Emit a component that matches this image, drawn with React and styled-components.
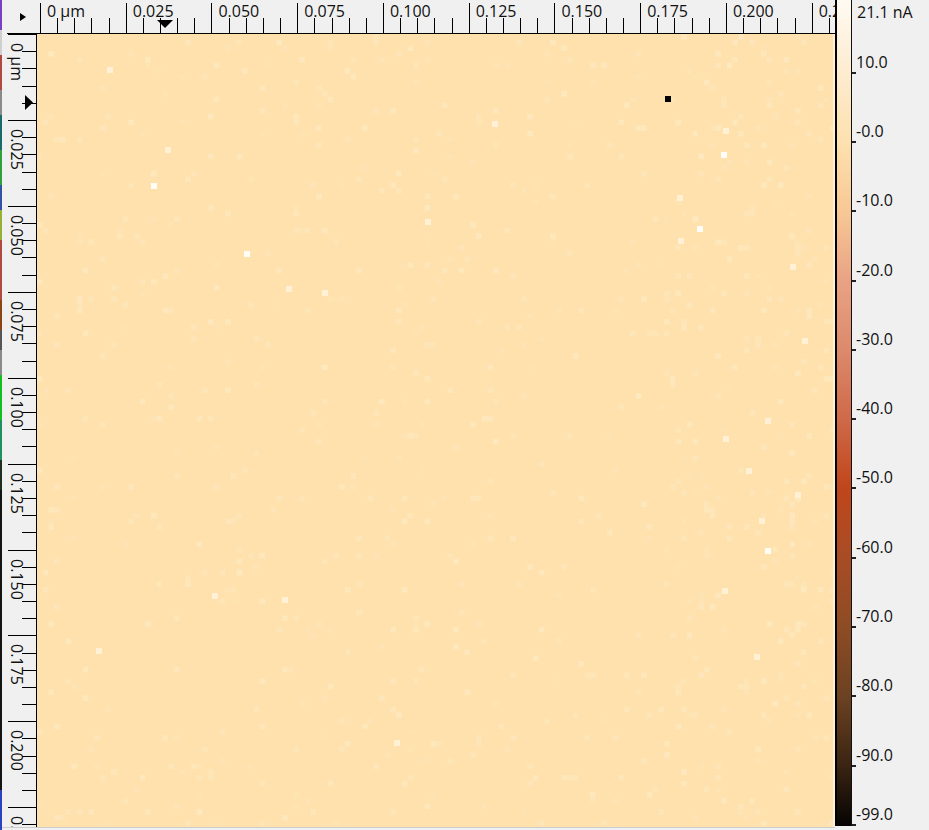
import React from 'react'
import styled, { createGlobalStyle } from 'styled-components'

const GlobalStyle = createGlobalStyle`
  html, body { margin: 0; padding: 0; background: #f0f0f0; }
  body {
    font-family: "Open Sans", "Noto Sans", sans-serif;
    color: #111;
    overflow: hidden;
  }
`

// scan geometry (px)
const IMG_W = 798
const IMG_H = 793
const X_STEP = 85.74   // 0.025 µm along x
const Y_STEP = 85.9    // 0.025 µm along y
const X0 = 3
const Y0 = 0.1

// colour scale: value -> page y
const scaleY = v => 72.7 + (10 - v) * 6.93

const Window = styled.div`
  width: 929px;
  height: 830px;
  display: flex;
  align-items: flex-start;
  background: #f0f0f0;
`

const EdgeStrip = styled.div`
  width: 2px;
  height: 830px;
  flex: none;
  background: linear-gradient(
    #7b3fc4 0 30px, #cfcfcf 30px 55px, #b04a40 55px 90px, #8a8a8a 90px 115px,
    #1c6b6b 115px 150px, #2fa03a 150px 185px, #3452a4 185px 210px, #96b035 210px 240px,
    #b04a40 240px 300px, #8b4513 300px 330px, #555 330px 350px, #8a8a8a 350px 375px,
    #12c020 375px 420px, #209060 420px 460px, #203020 460px 490px, #141414 490px 790px,
    #2a44c0 790px 830px
  );
`

const Viewer = styled.div`
  display: grid;
  grid-template-columns: 35px ${IMG_W}px;
  grid-template-rows: 34px ${IMG_H}px;
  border-bottom: 1px solid #cdcdcd;
  flex: none;
`

const Corner = styled.div`
  display: flex;
  flex-direction: column;
`

const CornerArrowRow = styled.div`
  height: 33px;
  display: flex;
  align-items: center;
  padding-left: 18px;
  box-sizing: border-box;
`

const CornerArrow = styled.span`
  width: 0;
  height: 0;
  border-left: 6px solid #000;
  border-top: 4px solid transparent;
  border-bottom: 4px solid transparent;
`

const CornerRule = styled.div`
  height: 1px;
  margin-left: 5px;
  background: #000;
`

const Ruler = styled.div`
  position: relative;
  overflow: hidden;
  background: #f0f0f0;
  box-sizing: border-box;
  border-${p => (p.$side ? 'right' : 'bottom')}: 1px solid #000;
  svg { display: block; }
`

const TopLabel = styled.span`
  position: absolute;
  top: 3px;
  font-size: 16px;
  line-height: 16px;
  white-space: nowrap;
`

const SideLabel = styled.span`
  position: absolute;
  left: 7px;
  writing-mode: vertical-rl;
  font-size: 16px;
  line-height: 16px;
  white-space: nowrap;
`

const ScanImage = styled.div`
  background: #fee1ac;
  overflow: hidden;
  svg { display: block; }
`

const ColorBar = styled.div`
  width: 14px;
  height: 826px;
  flex: none;
  border-left: 2px solid #000;
  border-right: 1px solid #111;
  background: linear-gradient(
    #fffaf2 0px,
    #fdeed6 60px,
    #fde1ae 143px,
    #f7c895 212px,
    #e9a384 280px,
    #dc8a6c 349px,
    #cf6a4a 418px,
    #c0461b 487px,
    #a84c25 556px,
    #8e4c24 626px,
    #6c4222 696px,
    #3a2412 766px,
    #050302 826px
  );
`

const Scale = styled.div`
  position: relative;
  flex: 1;
  height: 830px;
`

const ScaleTick = styled.span`
  position: absolute;
  left: 0;
  width: 4px;
  height: 2px;
  background: #222;
`

const ScaleLabel = styled.span`
  position: absolute;
  left: 4px;
  font-size: 16px;
  line-height: 16px;
  white-space: nowrap;
`

const UnitLabel = styled(ScaleLabel)`
  top: 4px;
  left: 5px;
`

const xLabels = ['0 µm', '0.025', '0.050', '0.075', '0.100', '0.125', '0.150', '0.175', '0.200', '0.225']
const yLabels = xLabels

function TopRuler() {
  const ticks = []
  for (let j = 0; j <= 50; j++) {
    const x = Math.round(X0 + (X_STEP / 5) * j) + 0.5
    if (x > IMG_W) break
    const major = j % 5 === 0
    ticks.push(<line key={j} x1={x} x2={x} y1={major ? 3 : 18} y2={33} stroke="#000" strokeWidth="1" />)
  }
  return (
    <Ruler>
      <svg width={IMG_W} height="33" shapeRendering="crispEdges">
        {ticks}
        <polygon points="120,20 136,20 128,28" fill="#000" shapeRendering="auto" />
      </svg>
      {xLabels.map((t, i) => (
        <TopLabel key={t} style={{ left: X0 + X_STEP * i + 7 }}>{t}</TopLabel>
      ))}
    </Ruler>
  )
}

function SideRuler() {
  const ticks = []
  for (let j = 0; j <= 50; j++) {
    const y = Math.round(Y0 + (Y_STEP / 5) * j) + 0.5
    if (y > IMG_H) break
    const major = j % 5 === 0
    ticks.push(<line key={j} x1={major ? 6 : 20} x2={34} y1={y} y2={y} stroke="#000" strokeWidth="1" />)
  }
  return (
    <Ruler $side>
      <svg width="34" height={IMG_H} shapeRendering="crispEdges">
        {ticks}
        <polygon points="23,61 31,68.5 23,76" fill="#000" shapeRendering="auto" />
      </svg>
      {yLabels.map((t, i) => (
        <SideLabel key={t} style={{ top: Y0 + Y_STEP * i + 9 }}>{t}</SideLabel>
      ))}
    </Ruler>
  )
}

function rng(seed) {
  let s = seed
  return () => {
    s = (s * 1664525 + 1013904223) % 4294967296
    return s / 4294967296
  }
}

const CELL = IMG_W / 140

const brightDots = [
  [117, 152], [210, 220], [687, 121], [663, 195], [731, 517],
]
const faintDots = [
  [458, 90], [643, 164], [644, 207], [689, 97], [131, 116], [391, 188], [288, 259],
  [252, 255], [689, 405], [731, 387], [712, 437], [761, 461], [725, 487], [688, 557],
  [178, 562], [248, 566], [62, 617], [720, 623], [360, 709], [768, 307], [756, 233], [73, 36],
]

function Scan() {
  const rand = rng(7)
  const cells = []
  const cols = Math.ceil(IMG_W / CELL)
  const rows = Math.ceil(IMG_H / CELL)
  for (let r = 0; r < rows; r++) {
    for (let c = 0; c < cols; c++) {
      const v = rand()
      const bias = c > 110 ? 0.03 : 0
      if (v < 0.04 + bias) {
        cells.push(
          <rect key={r * 1000 + c} x={c * CELL} y={r * CELL} width={CELL} height={CELL}
            fill="#fff2d6" opacity={(0.15 + rand() * 0.25).toFixed(2)} />
        )
      }
    }
  }
  return (
    <ScanImage>
      <svg width={IMG_W} height={IMG_H}>
        {cells}
        {faintDots.map(([x, y], i) => (
          <rect key={'f' + i} x={x - 3} y={y - 3} width="6" height="6" fill="#fff0d6" />
        ))}
        {brightDots.map(([x, y], i) => (
          <rect key={'b' + i} x={x - 3} y={y - 3} width="6" height="6" fill="#fffdf8" />
        ))}
        <rect x="628" y="62" width="6" height="6" fill="#000" />
        <rect x={IMG_W - 2} y="0" width="2" height={IMG_H} fill="#fff0d4" />
      </svg>
    </ScanImage>
  )
}

function ColorScale() {
  const values = [10, 0, -10, -20, -30, -40, -50, -60, -70, -80, -90]
  return (
    <Scale>
      <UnitLabel>21.1 nA</UnitLabel>
      {values.map(v => {
        const y = scaleY(v)
        return (
          <React.Fragment key={v}>
            <ScaleTick style={{ top: Math.round(y) - 1 }} />
            <ScaleLabel style={{ top: Math.round(y - 19) }}>
              {v === 10 ? '10.0' : '-' + Math.abs(v).toFixed(1)}
            </ScaleLabel>
          </React.Fragment>
        )
      })}
      <ScaleTick style={{ top: 824 }} />
      <ScaleLabel style={{ top: 806 }}>-99.0</ScaleLabel>
    </Scale>
  )
}

export default function App() {
  return (
    <>
      <GlobalStyle />
      <Window>
        <EdgeStrip />
        <Viewer>
          <Corner>
            <CornerArrowRow><CornerArrow /></CornerArrowRow>
            <CornerRule />
          </Corner>
          <TopRuler />
          <SideRuler />
          <Scan />
        </Viewer>
        <ColorBar />
        <ColorScale />
      </Window>
    </>
  )
}
